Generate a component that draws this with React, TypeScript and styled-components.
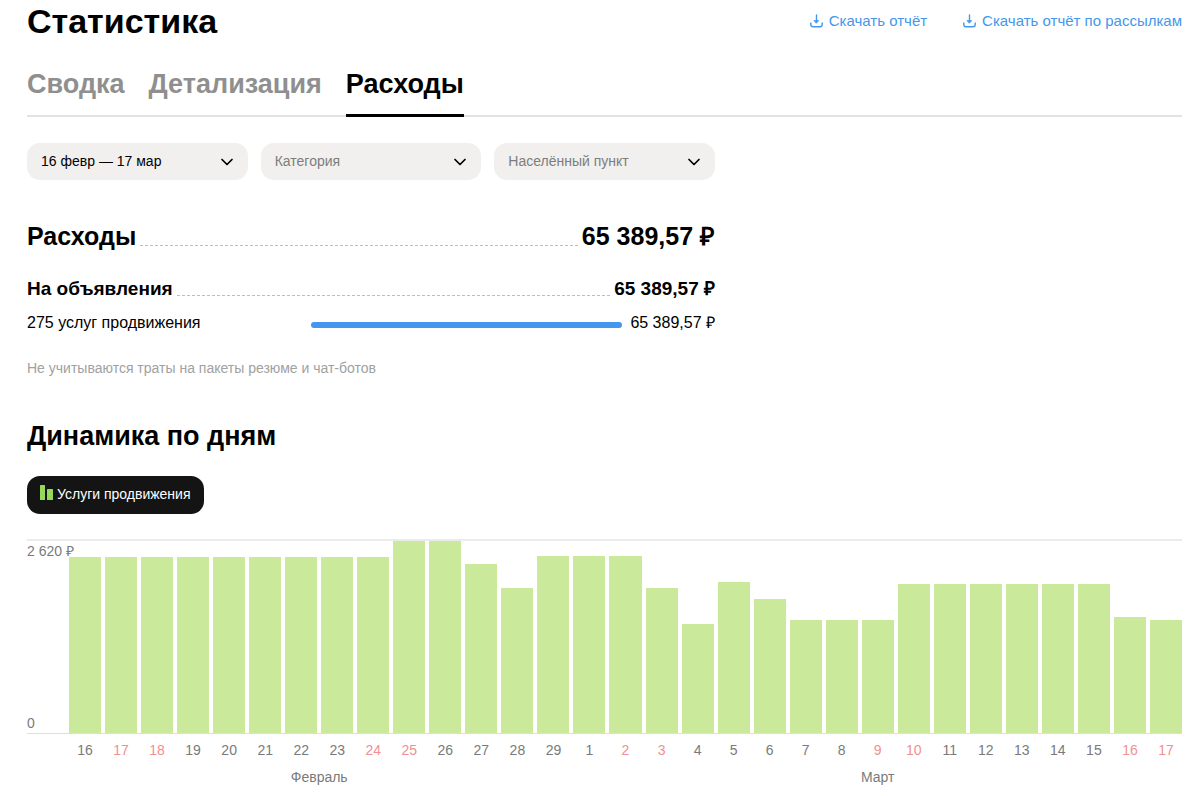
import React from 'react';
import styled, { createGlobalStyle } from 'styled-components';

const GlobalStyle = createGlobalStyle`
  *, *::before, *::after { box-sizing: border-box; }
  body {
    margin: 0;
    background: #fff;
    color: #000;
    font-family: "Liberation Sans", Arial, sans-serif;
    font-size: 14px;
    line-height: 20px;
  }
  h1, h2, h3, p { margin: 0; }
`;

const Page = styled.main`
  padding: 2px 18px 8px 27px;
`;

const Header = styled.header`
  display: flex;
  justify-content: space-between;
  align-items: center;
`;

const PageTitle = styled.h1`
  font-size: 34px;
  line-height: 38px;
`;

const Downloads = styled.div`
  display: flex;
  gap: 36px;
`;

const DownloadLink = styled.a`
  display: flex;
  align-items: center;
  gap: 6px;
  color: #4497ec;
  font-size: 15px;
  line-height: 20px;
  text-decoration: none;
`;

const Tabs = styled.nav`
  display: flex;
  gap: 24px;
  margin-top: 24px;
  box-shadow: inset 0 -2px #e2e2e2;
`;

const Tab = styled.a<{ $active?: boolean }>`
  padding: 3px 0 12px;
  border-bottom: 3px solid ${p => (p.$active ? '#000' : 'transparent')};
  color: ${p => (p.$active ? '#000' : '#8f8f8f')};
  font-size: 27px;
  font-weight: 700;
  line-height: 35px;
  text-decoration: none;
`;

const Filters = styled.form`
  display: grid;
  grid-template-columns: repeat(3, 1fr);
  gap: 13px;
  max-width: 688px;
  margin-top: 26px;
`;

const FilterField = styled.label`
  display: grid;
  align-items: center;
  & > * { grid-area: 1 / 1; }
  & > svg {
    justify-self: end;
    margin-right: 14px;
    pointer-events: none;
  }
`;

const FilterSelect = styled.select<{ $filled?: boolean }>`
  appearance: none;
  width: 100%;
  height: 37px;
  padding: 0 40px 2px 14px;
  border: 0;
  border-radius: 13px;
  background: #f1f0ee;
  color: ${p => (p.$filled ? '#000' : '#7d7d7d')};
  font: inherit;
`;

const Expenses = styled.section`
  max-width: 688px;
  margin-top: 39px;
`;

const TotalRow = styled.div<{ $small?: boolean }>`
  display: flex;
  gap: 4px;
  margin-top: ${p => (p.$small ? '22px' : '0')};
  font-size: ${p => (p.$small ? '19px' : '25px')};
  font-weight: 700;
  line-height: ${p => (p.$small ? '28px' : '34px')};

  & > * {
    font-size: inherit;
    line-height: inherit;
  }
`;

const Leader = styled.span`
  flex: 1;
  margin-bottom: 7px;
  border-bottom: 1px dashed #bdbdbd;
`;

const ServiceRow = styled.div`
  display: grid;
  grid-template-columns: 276px 1fr auto;
  align-items: center;
  gap: 8px;
  margin-top: 9px;
  font-size: 16px;
  line-height: 22px;
`;

const ShareTrack = styled.div`
  height: 6px;
  margin-top: 4px;
  border-radius: 3px;
`;

const ShareFill = styled.div`
  height: 100%;
  border-radius: 3px;
  background: #4497ec;
`;

const Note = styled.p`
  margin-top: 24px;
  color: #a1a1a1;
`;

const DynamicsTitle = styled.h2`
  margin-top: 40px;
  font-size: 27px;
  line-height: 36px;
`;

const SeriesButton = styled.button`
  display: flex;
  align-items: center;
  gap: 4px;
  height: 38px;
  margin-top: 22px;
  padding: 0 13px 2px;
  border: 0;
  border-radius: 13px;
  background: #141414;
  color: #fff;
  font: inherit;
`;

const Chart = styled.section`
  margin-top: 25px;
  color: #7a7a7a;
`;

const Plot = styled.div`
  display: grid;
  grid-template-columns: 42px 1fr;
  height: 195px;
  border-top: 2px solid #ebebeb;
  border-bottom: 1px solid #dedede;
`;

const Scale = styled.div`
  display: flex;
  flex-direction: column;
  justify-content: space-between;
  white-space: nowrap;
`;

const Columns = styled.div`
  display: grid;
  grid-template-columns: repeat(31, 1fr);
  gap: 4px;
  align-items: end;
`;

const Column = styled.div`
  background: #cae99a;
`;

const DayAxis = styled.div`
  display: grid;
  grid-template-columns: repeat(31, 1fr);
  column-gap: 4px;
  row-gap: 7px;
  margin: 6px 0 0 42px;
  text-align: center;
`;

const Day = styled.span<{ $weekend: boolean }>`
  color: ${p => (p.$weekend ? '#f19090' : 'inherit')};
`;

const Month = styled.span<{ $days: number }>`
  grid-column: span ${p => p.$days};
`;

const DownloadIcon = () => (
  <svg width="13" height="14" viewBox="0 0 13 14" fill="none" stroke="currentColor" strokeWidth="1.4" strokeLinecap="round" strokeLinejoin="round" aria-hidden="true">
    <path d="M6.500 1v7" />
    <path d="M4.300 6.600h4.400L6.500 9z" fill="currentColor" strokeWidth="0.8" />
    <path d="M0.800 9v1.600A2.200 2.200 0 0 0 3 12.800h7A2.200 2.200 0 0 0 12.200 10.600V9" />
  </svg>
);

const ChevronIcon = () => (
  <svg width="14" height="8" viewBox="0 0 14 8" fill="none" stroke="#000" strokeWidth="1.7" strokeLinecap="round" strokeLinejoin="round" aria-hidden="true">
    <path d="M2 1.500 7 6.500 12 1.500" />
  </svg>
);

const BarsIcon = () => (
  <svg width="13" height="20" viewBox="0 0 13 20" fill="#97d759" aria-hidden="true">
    <rect x="0" y="1" width="5" height="15" rx="0.5" />
    <rect x="7" y="5" width="6" height="11" rx="0.5" />
  </svg>
);

const MAX = 2620;
const DAYS: { day: number; value: number; weekend?: boolean }[] = [
  { day: 16, value: 2402 },
  { day: 17, value: 2402, weekend: true },
  { day: 18, value: 2402, weekend: true },
  { day: 19, value: 2402 },
  { day: 20, value: 2402 },
  { day: 21, value: 2402 },
  { day: 22, value: 2402 },
  { day: 23, value: 2402 },
  { day: 24, value: 2402, weekend: true },
  { day: 25, value: 2620, weekend: true },
  { day: 26, value: 2620 },
  { day: 27, value: 2306 },
  { day: 28, value: 1979 },
  { day: 29, value: 2421 },
  { day: 1, value: 2421 },
  { day: 2, value: 2421, weekend: true },
  { day: 3, value: 1976, weekend: true },
  { day: 4, value: 1487 },
  { day: 5, value: 2065 },
  { day: 6, value: 1835 },
  { day: 7, value: 1542 },
  { day: 8, value: 1542 },
  { day: 9, value: 1542, weekend: true },
  { day: 10, value: 2030, weekend: true },
  { day: 11, value: 2030 },
  { day: 12, value: 2030 },
  { day: 13, value: 2030 },
  { day: 14, value: 2030 },
  { day: 15, value: 2030 },
  { day: 16, value: 1588, weekend: true },
  { day: 17, value: 1542, weekend: true },
];

const FILTERS = [
  { name: 'Период', value: '16 февр — 17 мар', filled: true },
  { name: 'Категория', value: 'Категория' },
  { name: 'Населённый пункт', value: 'Населённый пункт' },
];

export default function App() {
  return (
    <>
      <GlobalStyle />
      <Page>
        <Header>
          <PageTitle>Статистика</PageTitle>
          <Downloads>
            <DownloadLink href="#report"><DownloadIcon />Скачать отчёт</DownloadLink>
            <DownloadLink href="#mailings"><DownloadIcon />Скачать отчёт по рассылкам</DownloadLink>
          </Downloads>
        </Header>

        <Tabs>
          <Tab href="#summary">Сводка</Tab>
          <Tab href="#details">Детализация</Tab>
          <Tab href="#expenses" $active aria-current="page">Расходы</Tab>
        </Tabs>

        <Filters>
          {FILTERS.map(f => (
            <FilterField key={f.name}>
              <FilterSelect aria-label={f.name} $filled={f.filled}>
                <option>{f.value}</option>
              </FilterSelect>
              <ChevronIcon />
            </FilterField>
          ))}
        </Filters>

        <Expenses>
          <TotalRow>
            <h2>Расходы</h2>
            <Leader />
            <span>65 389,57 ₽</span>
          </TotalRow>
          <TotalRow $small>
            <h3>На объявления</h3>
            <Leader />
            <span>65 389,57 ₽</span>
          </TotalRow>
          <ServiceRow>
            <span>275 услуг продвижения</span>
            <ShareTrack><ShareFill style={{ width: '100%' }} /></ShareTrack>
            <span>65 389,57 ₽</span>
          </ServiceRow>
          <Note>Не учитываются траты на пакеты резюме и чат-ботов</Note>
        </Expenses>

        <DynamicsTitle>Динамика по дням</DynamicsTitle>
        <SeriesButton type="button" aria-pressed="true"><BarsIcon />Услуги продвижения</SeriesButton>

        <Chart aria-label="Динамика по дням">
          <Plot>
            <Scale>
              <span>2 620 ₽</span>
              <span>0</span>
            </Scale>
            <Columns>
              {DAYS.map((d, i) => (
                <Column key={i} style={{ height: `${(d.value / MAX) * 100}%` }} />
              ))}
            </Columns>
          </Plot>
          <DayAxis>
            {DAYS.map((d, i) => (
              <Day key={i} $weekend={!!d.weekend}>{d.day}</Day>
            ))}
            <Month $days={14}>Февраль</Month>
            <Month $days={17}>Март</Month>
          </DayAxis>
        </Chart>
      </Page>
    </>
  );
}
